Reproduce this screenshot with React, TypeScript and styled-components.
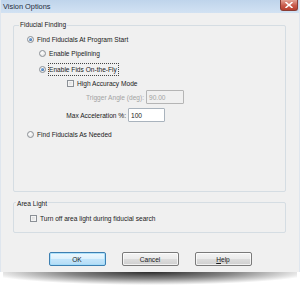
import React from "react";
import styled, { createGlobalStyle } from "styled-components";

const Global = createGlobalStyle`
  html, body { margin: 0; padding: 0; background: #ffffff; }
  body { font-family: "Liberation Sans", Arial, sans-serif; }
  * { box-sizing: border-box; }
`;

const Page = styled.div`
  width: 300px;
  height: 289px;
  display: flex;
  flex-direction: column;
`;

const Dialog = styled.div`
  width: 300px;
  height: 272px;
  background: #f0f0f0;
  display: flex;
  flex-direction: column;
  border-left: 1px solid #dfe6ee;
  border-right: 1px solid #dfe6ee;
`;

const Shadow = styled.div`
  height: 13px;
  margin: 0 3px;
  background: radial-gradient(ellipse 56% 100% at 50% 0%, rgba(20,20,20,0.9) 0%, rgba(50,50,50,0.6) 50%, rgba(255,255,255,0) 100%);
`;

const TitleBar = styled.div`
  height: 13px;
  display: flex;
  align-items: center;
  justify-content: space-between;
  padding-left: 2px;
  padding-right: 1px;
  background: linear-gradient(#bfd4eb, #d2e2f3);
`;

const Title = styled.span`
  font-size: 7.4px;
  color: #1d2a3a;
  line-height: 1;
`;

const Close = styled.div`
  width: 18px;
  height: 11px;
  align-self: flex-start;
  border: 1px solid #8a3d35;
  border-top: none;
  border-radius: 0 0 3px 3px;
  background: linear-gradient(#e3a496, #c95b4c 55%, #b8402f);
  display: flex;
  align-items: center;
  justify-content: center;
`;

const Body = styled.div`
  flex: 1;
  display: flex;
  flex-direction: column;
  padding: 12px 13px 0 12px;
`;

const Group = styled.div<{ $h: number; $pt: number; $pl: number }>`
  position: relative;
  height: ${(p) => p.$h}px;
  padding: ${(p) => p.$pt}px 0 0 ${(p) => p.$pl}px;
  border: 1px solid #d5dde3;
  border-radius: 2px;
  display: flex;
  flex-direction: column;
`;

const Legend = styled.span<{ $left: number; $top: number }>`
  position: absolute;
  top: ${(p) => p.$top}px;
  left: ${(p) => p.$left}px;
  font-size: 6.6px;
  line-height: 10px;
  color: #1a1a1a;
  padding: 0 1px;
  background: #f0f0f0;
  white-space: nowrap;
`;

const Row = styled.div<{ $mt: number; $indent: number }>`
  height: 14px;
  margin-top: ${(p) => p.$mt}px;
  padding-left: ${(p) => p.$indent}px;
  display: flex;
  align-items: center;
  gap: 3px;
  font-size: 6.6px;
  color: #1a1a1a;
  white-space: nowrap;
`;

const Radio = styled.span<{ $on?: boolean }>`
  width: 7px;
  height: 7px;
  flex: none;
  border-radius: 50%;
  border: 1px solid #8b9096;
  background: radial-gradient(circle at 40% 35%, #ffffff, #dcdcdc);
  display: flex;
  align-items: center;
  justify-content: center;
  &::after {
    content: "";
    width: 3px;
    height: 3px;
    border-radius: 50%;
    background: ${(p) => (p.$on ? "radial-gradient(circle at 35% 35%, #7fb2e8, #1d4f8e)" : "transparent")};
  }
`;

const Check = styled.span`
  width: 7px;
  height: 7px;
  flex: none;
  border: 1px solid #8b9096;
  background: linear-gradient(135deg, #d6d6d6, #f8f8f8);
  box-shadow: inset 0 0 0 1px #f4f4f4;
`;

const Focus = styled.span`
  outline: 1px dotted #444;
  outline-offset: 0px;
  padding: 1px 1px 1px 0;
  line-height: 9px;
`;

const FieldLabel = styled.span<{ $w: number; $off?: boolean }>`
  width: ${(p) => p.$w}px;
  text-align: right;
  color: ${(p) => (p.$off ? "#a3a3a3" : "#1a1a1a")};
`;

const Input = styled.span<{ $w: number; $off?: boolean }>`
  width: ${(p) => p.$w}px;
  height: 14px;
  margin-left: -1px;
  border: 1px solid ${(p) => (p.$off ? "#b5b5b5" : "#a9b3bd")};
  background: ${(p) => (p.$off ? "#f0f0f0" : "#ffffff")};
  color: ${(p) => (p.$off ? "#a3a3a3" : "#1a1a1a")};
  padding-left: 2px;
  display: flex;
  align-items: center;
  border-radius: 1px;
`;

const Spacer = styled.div<{ $h: number }>`
  height: ${(p) => p.$h}px;
  flex: none;
`;

const Buttons = styled.div`
  display: flex;
  justify-content: center;
  gap: 16px;
  margin-top: 19px;
  padding-left: 1px;
`;

const Button = styled.div<{ $def?: boolean }>`
  width: 57px;
  height: 14px;
  border-radius: 2px;
  border: 1px solid ${(p) => (p.$def ? "#3c7fb1" : "#7a7a7a")};
  background: ${(p) =>
    p.$def
      ? "linear-gradient(#eef8fe 0%, #dcf1fd 48%, #c2e5fb 52%, #b5dcf5 100%)"
      : "linear-gradient(#f4f4f4 0%, #ebebeb 48%, #dcdcdc 52%, #cfcfcf 100%)"};
  box-shadow: inset 0 0 0 1px ${(p) => (p.$def ? "rgba(160,220,250,0.8)" : "rgba(255,255,255,0.7)")};
  display: flex;
  align-items: center;
  justify-content: center;
  font-size: 6.6px;
  color: #1a1a1a;
`;

const U = styled.span`
  text-decoration: underline;
`;

export default function App() {
  return (
    <Page>
      <Global />
      <Dialog>
        <TitleBar>
          <Title>Vision Options</Title>
          <Close>
            <svg width="8" height="6" viewBox="0 0 8 6">
              <path d="M1 0.5 L7 5.5 M7 0.5 L1 5.5" stroke="#ffffff" strokeWidth="1.6" strokeLinecap="round" />
            </svg>
          </Close>
        </TitleBar>
        <Body>
          <Group $h={167} $pt={6} $pl={13}>
            <Legend $left={5} $top={-6}>Fiducial Finding</Legend>
            <Row $mt={0} $indent={0}>
              <Radio $on />
              <span>Find Fiducials At Program Start</span>
            </Row>
            <Row $mt={0} $indent={12}>
              <Radio />
              <span>Enable Pipelining</span>
            </Row>
            <Row $mt={2} $indent={12}>
              <Radio $on />
              <Focus>Enable Fids On-the-Fly</Focus>
            </Row>
            <Row $mt={0} $indent={40}>
              <Check />
              <span>High Accuracy Mode</span>
            </Row>
            <Row $mt={0} $indent={0}>
              <FieldLabel $w={117} $off>Trigger Angle (deg):</FieldLabel>
              <Input $w={38} $off>90.00</Input>
            </Row>
            <Row $mt={4} $indent={0}>
              <FieldLabel $w={99}>Max Acceleration %:</FieldLabel>
              <Input $w={37}>100</Input>
            </Row>
            <Row $mt={5} $indent={0}>
              <Radio />
              <span>Find Fiducials As Needed</span>
            </Row>
          </Group>
          <Spacer $h={10} />
          <Group $h={31} $pt={8} $pl={16}>
            <Legend $left={2} $top={-4}>Area Light</Legend>
            <Row $mt={0} $indent={0}>
              <Check />
              <span>Turn off area light during fiducial search</span>
            </Row>
          </Group>
          <Buttons>
            <Button $def>OK</Button>
            <Button>Cancel</Button>
            <Button>
              <span>
                <U>H</U>elp
              </span>
            </Button>
          </Buttons>
        </Body>
      </Dialog>
      <Shadow />
    </Page>
  );
}
